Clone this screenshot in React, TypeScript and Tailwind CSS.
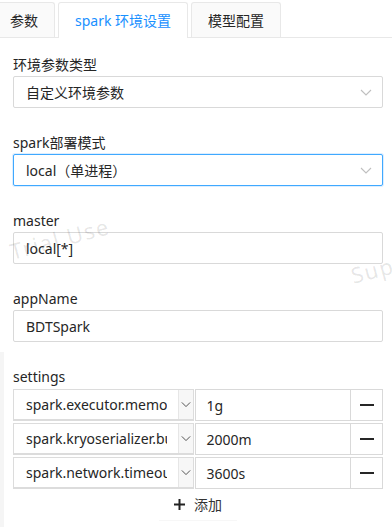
import { useState } from 'react';

const FONT = '"Noto Sans", "Noto Sans CJK SC", sans-serif';

function Chevron({ className }: { className?: string }) {
  return (
    <svg width="12" height="7" viewBox="0 0 12 7" className={className} fill="none">
      <path d="M1 1l5 5 5-5" stroke="currentColor" strokeWidth="1.1" />
    </svg>
  );
}

function Field({ label, children }: { label: string; children: React.ReactNode }) {
  return (
    <div className="mb-6">
      <div className="h-[22px] leading-[22px] text-[14px] text-[#262626]">{label}</div>
      {children}
    </div>
  );
}

function SelectBox({ value, focused }: { value: string; focused?: boolean }) {
  return (
    <div
      className={
        focused
          ? 'flex h-8 items-center justify-between rounded-[2px] border border-[#40a9ff] bg-white pl-[12px] pr-[10px] shadow-[0_0_0_1px_rgba(24,144,255,0.15)]'
          : 'flex h-8 items-center justify-between rounded-[2px] border border-[#d9d9d9] bg-white pl-[12px] pr-[10px]'
      }
    >
      <span className="text-[14px] text-[#262626]">{value}</span>
      <Chevron className="text-[#bfbfbf]" />
    </div>
  );
}

function TextInput({ value }: { value: string }) {
  return (
    <div className="flex h-8 items-center rounded-[2px] border border-[#d9d9d9] bg-white pl-[12px] text-[14px] text-[#262626]">
      {value}
    </div>
  );
}

const settings = [
  { key: 'spark.executor.memory', value: '1g' },
  { key: 'spark.kryoserializer.buffer.max', value: '2000m' },
  { key: 'spark.network.timeout', value: '3600s' },
];

export default function App() {
  const [tab] = useState(1);
  const tabs = ['参数', 'spark 环境设置', '模型配置'];

  return (
    <div className="relative h-[527px] w-[392px] overflow-hidden bg-white" style={{ fontFamily: FONT }}>
      <div className="mt-[2px] flex gap-[3px] border-b border-[#e8e8e8]">
        {tabs.map((t, i) => (
          <div
            key={t}
            className={
              i === tab
                ? '-mb-px flex h-[36px] items-center rounded-t-[3px] border border-b-0 border-[#e8e8e8] bg-white px-4 text-[14px] text-[#1890ff]'
                : i === 0
                  ? 'flex h-[35px] items-center rounded-tr-[3px] border border-l-0 border-b-0 border-[#e8e8e8] bg-[#fafafa] pl-[10px] pr-4 text-[14px] text-[#262626]'
                  : 'flex h-[35px] items-center rounded-t-[3px] border border-b-0 border-[#e8e8e8] bg-[#fafafa] px-4 text-[14px] text-[#262626]'
            }
          >
            {t}
          </div>
        ))}
      </div>

      <div className="pl-[13px] pr-[9px] pt-4">
        <Field label="环境参数类型">
          <SelectBox value="自定义环境参数" />
        </Field>
        <Field label="spark部署模式">
          <SelectBox value="local（单进程）" focused />
        </Field>
        <Field label="master">
          <TextInput value="local[*]" />
        </Field>
        <Field label="appName">
          <TextInput value="BDTSpark" />
        </Field>

        <div>
          <div className="h-[22px] leading-[22px] text-[14px] text-[#262626]">settings</div>
          <div className="mt-px flex flex-col gap-[2px]">
            {settings.map((s) => (
              <div key={s.key} className="flex h-8">
                <div className="flex w-[181px] border border-b-2 border-[#dcdcdc] bg-white">
                  <div className="flex-1 pl-[12px]">
                    <div className="w-[141px] overflow-hidden whitespace-nowrap text-[14px] leading-[29px] text-[#262626]">
                      {s.key}
                    </div>
                  </div>
                  <div className="flex w-[15px] items-center justify-center border-l border-[#e6e6e6] bg-[#f7f7f7]">
                    <Chevron className="w-[10px] text-[#444]" />
                  </div>
                </div>
                <div className="ml-px flex w-[157px] items-center border border-[#d9d9d9] bg-white pl-[11px] text-[14px] text-[#262626]">
                  {s.value}
                </div>
                <div className="flex w-8 items-center justify-center border border-l-0 border-[#d9d9d9] bg-white">
                  <div className="h-[2px] w-[14px] bg-[#262626]" />
                </div>
              </div>
            ))}
          </div>
          <div className="mx-auto flex h-8 w-[78px] items-center justify-center gap-[9px] border-b border-[#f7f7f7] text-[14px] text-[#333]">
            <svg width="11" height="11" viewBox="0 0 11 11">
              <path d="M5.5 0v11M0 5.5h11" stroke="#222" strokeWidth="2" />
            </svg>
            <span>添加</span>
          </div>
        </div>
      </div>

      <div className="pointer-events-none absolute left-[13px] top-[240px] origin-bottom-left -rotate-[15deg] select-none whitespace-nowrap text-[22px] leading-[22px] tracking-[1.5px] text-black/10">
        Trial Use
      </div>
      <div className="pointer-events-none absolute left-[354px] top-[264px] origin-bottom-left -rotate-[15deg] select-none whitespace-nowrap text-[22px] leading-[22px] tracking-[1.5px] text-black/10">
        Super
      </div>
      <div className="absolute bottom-0 left-0 top-[352px] w-[4px] bg-[#f5f5f5]" />
    </div>
  );
}
